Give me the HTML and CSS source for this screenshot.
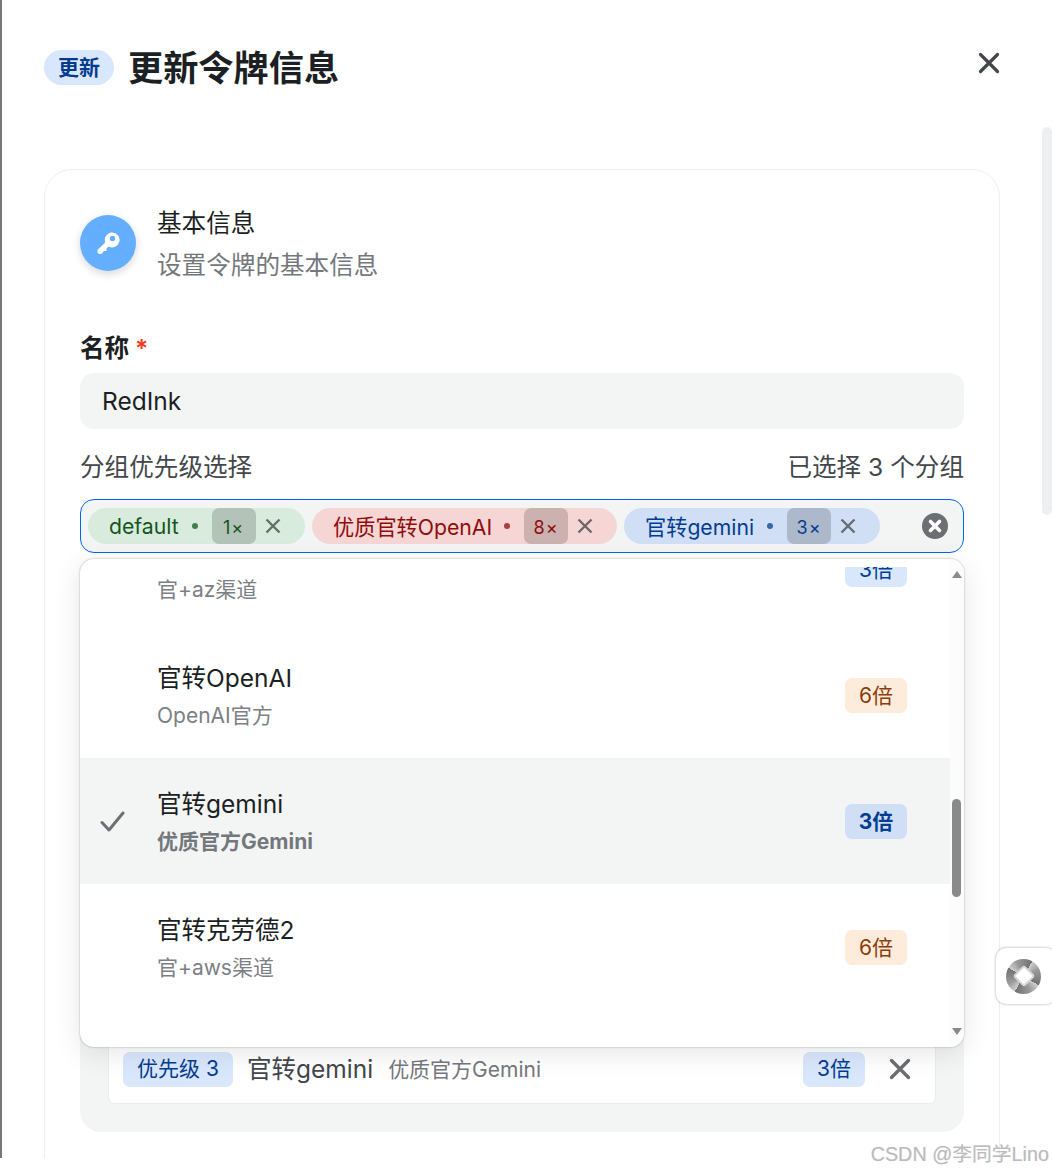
FILE: index.html
```html
<!DOCTYPE html>
<html lang="zh-CN">
<head>
<meta charset="utf-8">
<title>更新令牌信息</title>
<link rel="stylesheet" href="styles.css">
</head>
<body>
<div class="frame">
  <header class="header">
    <span class="head-badge">更新</span>
    <h1 class="head-title">更新令牌信息</h1>
    <svg class="head-close" width="22" height="22" viewBox="0 0 22 22"><path d="M2.500 2.500l17 17M19.500 2.500l-17 17" stroke="#43474b" stroke-width="3.200" stroke-linecap="round" fill="none"/></svg>
  </header>
  <section class="card">
    <div class="sec-head">
      <div class="sec-icon">
        <svg width="24" height="24" viewBox="0 0 24 24"><path fill-rule="evenodd" fill="#fff" d="M16 1.500a7.500 7.500 0 1 1-3.500 14.100L10.500 17.600V20H8l-2.500 3H3L1.500 21.500V19L9.200 11.500A7.500 7.500 0 0 1 16 1.500zM16.500 4.800a2.700 2.700 0 1 0 0 5.400a2.700 2.700 0 0 0 0-5.400z"/></svg>
      </div>
      <div>
        <div class="sec-title">基本信息</div>
        <div class="sec-sub">设置令牌的基本信息</div>
      </div>
    </div>
    <div class="field-label">名称 <span class="req">*</span></div>
    <div class="input">RedInk</div>
    <div class="group-row"><span>分组优先级选择</span><span>已选择 3 个分组</span></div>
    <div class="select-wrap">
      <div class="select">
        <span class="tag tag-green"><span>default</span><i class="dot"></i><b class="count">1×</b><svg class="tag-x" width="16" height="16" viewBox="0 0 16 16"><path d="M1.500 1.500l13 13M14.500 1.500l-13 13" stroke="#666d6c" stroke-width="2.400" fill="none"/></svg></span>
        <span class="tag tag-red"><span class="tag-label">优质官转OpenAI</span><i class="dot dot-tight"></i><b class="count">8×</b><svg class="tag-x" width="16" height="16" viewBox="0 0 16 16"><path d="M1.500 1.500l13 13M14.500 1.500l-13 13" stroke="#6d6665" stroke-width="2.400" fill="none"/></svg></span>
        <span class="tag tag-blue"><span class="tag-label">官转gemini</span><i class="dot"></i><b class="count">3×</b><svg class="tag-x" width="16" height="16" viewBox="0 0 16 16"><path d="M1.500 1.500l13 13M14.500 1.500l-13 13" stroke="#666c76" stroke-width="2.400" fill="none"/></svg></span>
        <svg class="clear" width="26" height="26" viewBox="0 0 26 26"><circle cx="13" cy="13" r="13" fill="#6b6e72"/><path d="M8.500 8.500l9 9M17.500 8.500l-9 9" stroke="#fff" stroke-width="3.600" stroke-linecap="round" fill="none"/></svg>
      </div>
      <div class="dropdown">
        <div class="viewport">
          <div class="list">
            <div class="option">
              <div class="check"></div>
              <div class="opt-text"><div class="opt-title">官转Azure</div><div class="opt-sub">官+az渠道</div></div>
              <span class="pill pill-blue">3倍</span>
            </div>
            <div class="option">
              <div class="check"></div>
              <div class="opt-text"><div class="opt-title">官转OpenAI</div><div class="opt-sub">OpenAI官方</div></div>
              <span class="pill pill-orange">6倍</span>
            </div>
            <div class="option option-on">
              <div class="check"><svg width="25" height="23" viewBox="0 0 25 23"><path d="M2 12.500l7 7.500L23 3" stroke="#6b7075" stroke-width="3" stroke-linecap="round" stroke-linejoin="round" fill="none"/></svg></div>
              <div class="opt-text"><div class="opt-title">官转gemini</div><div class="opt-sub opt-sub-b">优质官方Gemini</div></div>
              <span class="pill pill-blue pill-b">3倍</span>
            </div>
            <div class="option">
              <div class="check"></div>
              <div class="opt-text"><div class="opt-title">官转克劳德2</div><div class="opt-sub">官+aws渠道</div></div>
              <span class="pill pill-orange">6倍</span>
            </div>
          </div>
        </div>
        <div class="track">
          <i class="arrow-up"></i>
          <i class="thumb"></i>
          <i class="arrow-down"></i>
        </div>
      </div>
    </div>
    <div class="order-box">
      <div class="order-row">
        <span class="pill pill-prio">优先级 3</span>
        <span class="order-name">官转gemini</span>
        <span class="order-desc">优质官方Gemini</span>
        <span class="pill pill-blue order-pill">3倍</span>
        <svg class="order-x" width="22" height="22" viewBox="0 0 22 22"><path d="M2.500 2.500l17 17M19.500 2.500l-17 17" stroke="#6b6e72" stroke-width="3.400" stroke-linecap="round" fill="none"/></svg>
      </div>
    </div>
  </section>
</div>
<div class="page-thumb"></div>
<div class="float-btn"><div class="float-logo"><i class="float-diamond"></i></div></div>
<div class="watermark">CSDN @李同学Lino</div>
</body>
</html>
```
FILE: styles.css
```css
* { box-sizing: border-box; }
html, body { margin: 0; padding: 0; background: #fff; }
body {
  width: 1052px;
  height: 1171px;
  overflow: hidden;
  position: relative;
  font-family: Inter, "Noto Sans CJK SC", sans-serif;
  color: #1c1f23;
}
.frame {
  height: 1158px;
  overflow: hidden;
  border-left: 2px solid #777;
}
.header {
  display: flex;
  align-items: center;
  padding: 50px 52px 0 42px;
  height: 85px;
  margin-bottom: 84px;
}
.head-badge {
  width: 70px;
  height: 35px;
  line-height: 35px;
  text-align: center;
  border-radius: 18px;
  background: #d9e7fd;
  color: #033b8f;
  font-size: 21px;
  font-weight: 700;
}
.head-title {
  margin: 2px 0 0 14px;
  font-size: 35.2px;
  line-height: 35px;
  font-weight: 700;
  flex: 1;
}
.head-close { margin-top: -10px; }
.card {
  width: 956px;
  margin-left: 42px;
  height: 1100px;
  padding: 31px 35px 0;
  border: 1px solid #eeeff1;
  border-radius: 28px;
}
.sec-head { display: flex; align-items: center; gap: 21px; }
.sec-icon {
  width: 56px;
  height: 56px;
  border-radius: 50%;
  background: #63aefe;
  box-shadow: 0 3px 8px rgba(0, 0, 0, .16);
  display: flex;
  align-items: center;
  justify-content: center;
}
.sec-title { font-size: 24.6px; line-height: 42px; padding-top: 1px; }
.sec-sub { font-size: 24.6px; line-height: 42px; color: #74787d; margin-bottom: -1px; }
.field-label {
  margin-top: 47px;
  font-size: 24.6px;
  line-height: 33px;
  font-weight: 700;
}
.req { color: #f93920; font-weight: 600; }
.input {
  margin-top: 8px;
  height: 56px;
  padding-left: 22px;
  line-height: 56px;
  font-size: 24.5px;
  background: #f3f5f5;
  border-radius: 14px;
}
.group-row {
  margin-top: 21px;
  display: flex;
  justify-content: space-between;
  font-size: 24.6px;
  line-height: 35px;
  color: #43474b;
}
.select-wrap { position: relative; margin-top: 14px; }
.select {
  height: 54px;
  padding-left: 7px;
  display: flex;
  align-items: center;
  gap: 7px;
  background: #f3f5f5;
  border: 1px solid #0064fa;
  border-radius: 14px;
  position: relative;
}
.tag {
  display: flex;
  align-items: center;
  height: 36px;
  padding-left: 21px;
  border-radius: 18px;
  font-size: 21.2px;
}
.tag-label { margin-bottom: 2px; }
.tag-green { background: #d9ebdc; color: #14561f; width: 217px; }
.tag-red { background: #f5d6d4; color: #8f0c0c; width: 305px; }
.tag-blue { background: #d0dff5; color: #033d91; width: 256px; }
.dot {
  width: 6px;
  height: 6px;
  margin: 0 14px 0 13px;
  border-radius: 50%;
  background: currentColor;
  opacity: .75;
}
.dot-tight { margin-left: 12px; }
.count {
  width: 44px;
  height: 36px;
  line-height: 39px;
  text-align: center;
  font-weight: 400;
  font-size: 18px;
  letter-spacing: 1px;
  border-radius: 7px;
  background: rgba(0, 0, 0, .17);
}
.tag-x { margin-left: 9px; }
.clear { position: absolute; right: 15px; top: 13px; }
.dropdown {
  position: absolute;
  top: 60px;
  left: 0;
  width: 884px;
  height: 488px;
  display: flex;
  background: #fff;
  border-radius: 14px;
  box-shadow: 0 0 2px rgba(0, 0, 0, .35), 0 6px 28px rgba(0, 0, 0, .1);
  overflow: hidden;
}
.viewport { flex: 1; margin-top: 8px; height: 472px; overflow: hidden; }
.list { margin-top: -61px; }
.option {
  height: 126px;
  display: flex;
  align-items: center;
  padding-right: 43px;
}
.option-on { background: #f3f5f5; }
.check {
  width: 77px;
  padding-left: 20px;
  display: flex;
  align-items: center;
}
.opt-text { flex: 1; padding-top: 3px; }
.opt-title { font-size: 24.5px; line-height: 38px; }
.opt-sub { font-size: 21px; line-height: 38px; color: #7c8085; }
.opt-sub-b { font-weight: 700; color: #74787d; }
.pill {
  width: 62px;
  height: 35px;
  line-height: 35px;
  text-align: center;
  border-radius: 7px;
  font-size: 21px;
}
.pill-blue { background: #d9e7fd; color: #033d91; }
.option-on .pill-blue { background: #d0dff5; }
.pill-orange { background: #fdecdb; color: #8a3b07; }
.pill-b { font-weight: 700; }
.track {
  width: 14px;
  background: #fcfcfc;
  position: relative;
}
.thumb {
  position: absolute;
  left: 2px;
  top: 240px;
  width: 9px;
  height: 98px;
  border-radius: 5px;
  background: #8a8a8a;
}
.arrow-up, .arrow-down {
  position: absolute;
  left: 2px;
  width: 0;
  height: 0;
  border-left: 5px solid transparent;
  border-right: 5px solid transparent;
}
.arrow-up { top: 12px; border-bottom: 7px solid #8a8a8a; }
.arrow-down { bottom: 12px; border-top: 7px solid #8a8a8a; }
.order-box {
  margin-top: 14px;
  height: 565px;
  padding: 0 28px 28px;
  display: flex;
  flex-direction: column;
  justify-content: flex-end;
  background: #f3f5f5;
  border-radius: 21px;
}
.order-row {
  height: 70px;
  padding: 0 24px 0 14px;
  display: flex;
  align-items: center;
  background: #fff;
  border: 1px solid #e9ebec;
  border-radius: 7px;
}
.pill-prio { width: 110px; background: #d9e7fd; color: #033d91; line-height: 33px; }
.order-pill { line-height: 33px; }
.order-name { margin: 0 0 3px 14px; font-size: 24.5px; color: #43474b; }
.order-desc { margin: 0 0 3px 15px; font-size: 21px; color: #74787d; flex: 1; }
.order-x { margin-left: 24px; }
.page-thumb {
  position: absolute;
  left: 1042px;
  top: 127px;
  width: 10px;
  height: 388px;
  border-radius: 5px;
  background: #eeeff1;
}
.float-btn {
  position: absolute;
  left: 996px;
  top: 948px;
  width: 60px;
  height: 56px;
  background: #fff;
  border-radius: 10px;
  box-shadow: 0 0 3px rgba(0, 0, 0, .35);
  display: flex;
  align-items: center;
  padding-left: 10px;
}
.float-logo {
  width: 35px;
  height: 35px;
  border-radius: 50%;
  background: repeating-conic-gradient(from 30deg, #cfcfcf 0deg, #9a9a9a 35deg, #727272 90deg);
  display: flex;
  align-items: center;
  justify-content: center;
}
.float-diamond {
  width: 12px;
  height: 12px;
  background: #fff;
  border-radius: 1px;
  box-shadow: 0 0 0 2px #d8d8d8;
  transform: rotate(45deg);
}
.watermark {
  position: absolute;
  right: 3px;
  top: 1142px;
  font-family: "Liberation Sans", "Noto Sans CJK SC", sans-serif;
  font-size: 19.8px;
  line-height: 24px;
  color: #bcbcbc;
  text-shadow: 0 0 1px #ddd;
}
```
